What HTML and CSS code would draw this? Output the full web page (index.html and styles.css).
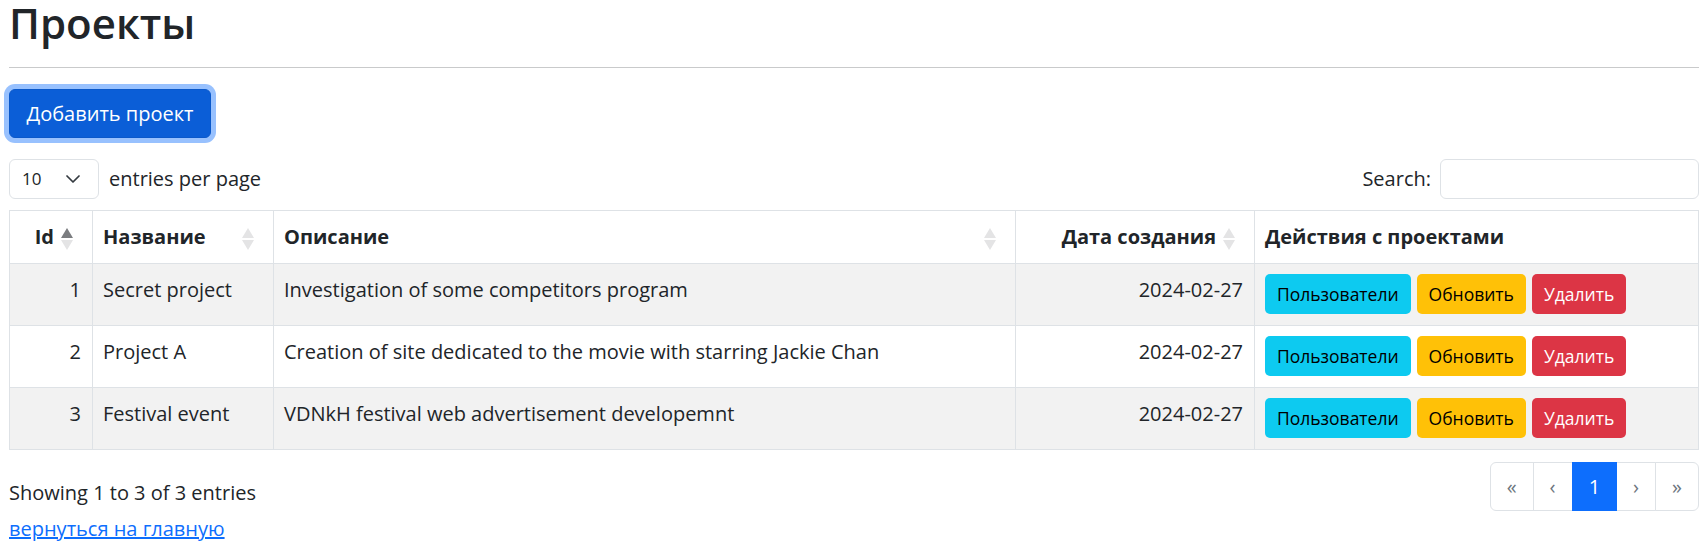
FILE: index.html
```html
<!DOCTYPE html>
<html lang="ru">
<head>
<meta charset="utf-8">
<title>Проекты</title>
<link rel="stylesheet" href="styles.css">
</head>
<body>
<div class="page">
  <h1 class="title">Проекты</h1>
  <hr class="rule">
  <div class="add-wrap"><button class="btn-add" type="button">Добавить проект</button></div>

  <div class="dt-top">
    <div class="length">
      <div class="select"><span class="select-value">10</span><svg class="chev" width="14" height="8" viewBox="0 0 14 8"><polyline points="1,1 7,7 13,1" fill="none" stroke="#343a40" stroke-width="1.7" stroke-linecap="round" stroke-linejoin="round"/></svg></div>
      <span class="length-label">entries per page</span>
    </div>
    <div class="search">
      <span class="search-label">Search:</span>
      <span class="search-input"></span>
    </div>
  </div>

  <table class="grid">
    <colgroup>
      <col class="c-id"><col class="c-name"><col class="c-desc"><col class="c-date"><col class="c-act">
    </colgroup>
    <thead>
      <tr>
        <th class="num sort asc">Id</th>
        <th class="sort">Название</th>
        <th class="sort">Описание</th>
        <th class="num sort">Дата создания</th>
        <th>Действия с проектами</th>
      </tr>
    </thead>
    <tbody>
      <tr class="odd">
        <td class="num">1</td>
        <td>Secret project</td>
        <td>Investigation of some competitors program</td>
        <td class="num">2024-02-27</td>
        <td class="acts"><div class="act-row"><span class="sbtn sbtn-info">Пользователи</span><span class="sbtn sbtn-warn">Обновить</span><span class="sbtn sbtn-danger">Удалить</span></div></td>
      </tr>
      <tr>
        <td class="num">2</td>
        <td>Project A</td>
        <td>Creation of site dedicated to the movie with starring Jackie Chan</td>
        <td class="num">2024-02-27</td>
        <td class="acts"><div class="act-row"><span class="sbtn sbtn-info">Пользователи</span><span class="sbtn sbtn-warn">Обновить</span><span class="sbtn sbtn-danger">Удалить</span></div></td>
      </tr>
      <tr class="odd">
        <td class="num">3</td>
        <td>Festival event</td>
        <td>VDNkH festival web advertisement developemnt</td>
        <td class="num">2024-02-27</td>
        <td class="acts"><div class="act-row"><span class="sbtn sbtn-info">Пользователи</span><span class="sbtn sbtn-warn">Обновить</span><span class="sbtn sbtn-danger">Удалить</span></div></td>
      </tr>
    </tbody>
  </table>

  <div class="dt-bottom">
    <div class="dt-info">Showing 1 to 3 of 3 entries</div>
    <nav class="pager">
      <span class="pg disabled first">«</span>
      <span class="pg disabled">‹</span>
      <span class="pg active">1</span>
      <span class="pg disabled">›</span>
      <span class="pg disabled last">»</span>
    </nav>
  </div>
  <a class="home-link" href="#">вернуться на главную</a>
</div>
</body>
</html>
```
FILE: styles.css
```css
html, body {
  margin: 0;
  padding: 0;
  background: #fff;
}
body {
  font-family: "Open Sans", "Noto Sans", sans-serif;
  font-size: 20px;
  line-height: 30px;
  color: #212529;
}
.page {
  padding: 0 9px 0 9px;
}
.title {
  margin: 0;
  padding-top: 1px;
  font-size: 42px;
  line-height: 44px;
  font-weight: 600;
  color: #212529;
}
.rule {
  margin: 22px 0 0;
  border: 0;
  border-top: 1px solid #c9cacb;
  height: 0;
}
.add-wrap {
  margin-top: 21px;
  display: flex;
}
.btn-add {
  height: 49px;
  width: 202px;
  padding: 0;
  border: 1px solid #0a58ca;
  border-radius: 6px;
  background: #0b5ed7;
  color: #fff;
  font-family: inherit;
  font-size: 20px;
  box-shadow: 0 0 0 5px #98c1fe;
}
.dt-top {
  margin-top: 21px;
  height: 40px;
  display: flex;
  justify-content: space-between;
  align-items: center;
}
.length {
  display: flex;
  align-items: center;
}
.select {
  width: 90px;
  height: 40px;
  box-sizing: border-box;
  border: 1px solid #dee2e6;
  border-radius: 6px;
  display: flex;
  align-items: center;
  padding-left: 12px;
  font-size: 17px;
}
.select-value {
  width: 44px;
}
.chev {
  display: block;
}
.length-label {
  margin-left: 10px;
}
.search {
  display: flex;
  align-items: center;
}
.search-input {
  display: block;
  margin-left: 9px;
  width: 259px;
  height: 40px;
  box-sizing: border-box;
  border: 1px solid #dee2e6;
  border-radius: 6px;
}
.grid {
  margin-top: 11px;
  width: 100%;
  border-collapse: collapse;
  table-layout: fixed;
}
.c-id { width: 83px; }
.c-name { width: 181px; }
.c-desc { width: 742px; }
.c-date { width: 239px; }
.grid th, .grid td {
  border: 1px solid #dee2e6;
  text-align: left;
  white-space: nowrap;
}
.grid th {
  padding: 11px 11px 11px 10px;
  vertical-align: bottom;
  font-weight: 700;
  position: relative;
}
.grid td {
  padding: 11px 11px 11px 10px;
  vertical-align: top;
}
.grid td.acts {
  padding: 10px 10px 11px 10px;
}
.grid tr.odd td {
  background: #f2f2f2;
}
.grid .num {
  text-align: right;
}
.grid th.sort {
  padding-right: 38px;
}
.grid th.sort::before,
.grid th.sort::after {
  content: "";
  position: absolute;
  right: 19px;
  width: 0;
  height: 0;
  border-left: 6px solid transparent;
  border-right: 6px solid transparent;
}
.grid th.sort::before {
  top: 17px;
  border-bottom: 10px solid #e4e4e5;
}
.grid th.sort::after {
  top: 29px;
  border-top: 10px solid #e4e4e5;
}
.grid th.sort.asc::before {
  border-bottom-color: #7b7d80;
}
.act-row {
  display: flex;
  gap: 6px;
}
.sbtn {
  display: block;
  height: 40px;
  box-sizing: border-box;
  padding: 0 12px;
  border-radius: 5px;
  font-size: 17.5px;
  line-height: 40px;
}
.sbtn-info { background: #0dcaf0; color: #000; }
.sbtn-warn { background: #ffc107; color: #000; }
.sbtn-danger { background: #dc3545; color: #fff; }
.dt-bottom {
  margin-top: 12px;
  display: flex;
  justify-content: space-between;
  align-items: flex-start;
}
.dt-info {
  padding-top: 16px;
}
.pager {
  display: flex;
}
.pg {
  display: block;
  height: 49px;
  box-sizing: border-box;
  padding: 0 16px;
  line-height: 47px;
  border: 1px solid #dee2e6;
  margin-left: -1px;
  color: #6c757d;
  background: #fff;
}
.pg.first {
  border-radius: 6px 0 0 6px;
  margin-left: 0;
}
.pg.last {
  border-radius: 0 6px 6px 0;
}
.pg.active {
  background: #0d6efd;
  border-color: #0d6efd;
  color: #fff;
  position: relative;
}
.home-link {
  display: inline-block;
  margin-top: 3px;
  color: #0d6efd;
  text-decoration: underline;
}
```
